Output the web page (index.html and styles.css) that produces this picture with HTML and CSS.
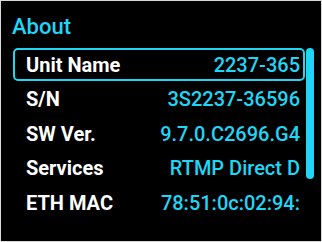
FILE: index.html
```html
<!DOCTYPE html>
<html lang="en">
<head>
    <meta charset="UTF-8">
    <meta name="viewport" content="width=device-width, initial-scale=1.0">
    <title>About</title>
    <link rel="stylesheet" href="styles.css">
</head>
<body>
    <div id="tela">
        <h1 class="titulo">About</h1>
        <div class="painel">
            <div class="lista">
                <div class="linha ativa">
                    <span class="rotulo">Unit Name</span>
                    <span class="valor">2237-365</span>
                </div>
                <div class="linha">
                    <span class="rotulo">S/N</span>
                    <span class="valor">3S2237-36596</span>
                </div>
                <div class="linha">
                    <span class="rotulo">SW Ver.</span>
                    <span class="valor">9.7.0.C2696.G4</span>
                </div>
                <div class="linha">
                    <span class="rotulo">Services</span>
                    <span class="valor">RTMP Direct D</span>
                </div>
                <div class="linha">
                    <span class="rotulo">ETH MAC</span>
                    <span class="valor">78:51:0c:02:94:</span>
                </div>
            </div>
            <div class="rolagem">
                <div class="barra"></div>
            </div>
        </div>
    </div>
</body>
</html>
```

FILE: styles.css
```css
    body {
        margin: 0;
        padding: 0;
        background: #000;
        font-family: Roboto, "Liberation Sans", Arial, sans-serif;
    }
    #tela {
        box-sizing: border-box;
        width: 322px;
        height: 242px;
        border: 1px solid #d8d8d8;
        background: #000;
        padding: 14px 7px 0 11px;
        overflow: hidden;
    }
    .titulo {
        margin: 0 0 9px 0;
        font-size: 22px;
        line-height: 24px;
        font-weight: 500;
        color: #1fd6f5;
    }
    .painel {
        display: flex;
        margin-left: 1px;
    }
    .lista {
        flex: 1;
        display: flex;
        flex-direction: column;
        gap: 1.5px;
    }
    .linha {
        box-sizing: border-box;
        height: 33px;
        border: 2px solid transparent;
        border-radius: 5px;
        padding: 0 3px 0 11px;
        display: flex;
        align-items: center;
        justify-content: space-between;
        white-space: nowrap;
    }
    .linha.ativa {
        border-color: #1fd6f5;
    }
    .rotulo {
        color: #fff;
        font-size: 20px;
        font-weight: 700;
    }
    .valor {
        color: #1fd6f5;
        font-size: 20px;
        font-weight: 500;
    }
    .rolagem {
        width: 8px;
        margin-left: 1px;
    }
    .barra {
        height: 131px;
        background: #1fd6f5;
        border-radius: 4px;
    }
```
